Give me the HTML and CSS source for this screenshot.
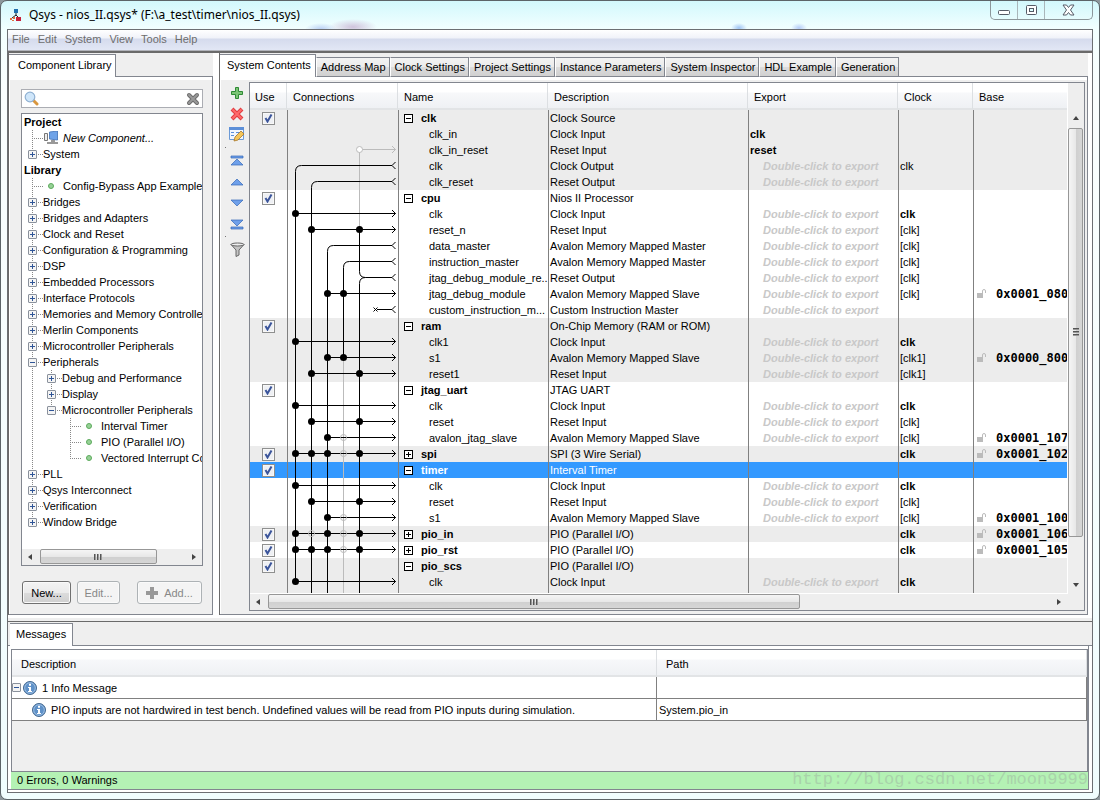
FILE: index.html
```html
<!DOCTYPE html>
<html lang="en">

<head>
    <meta charset="UTF-8">
    <title>Qsys - nios_II.qsys* (F:\a_test\timer\nios_II.qsys)</title>
    <link rel="stylesheet" href="styles.css">
</head>

<body>

    <!-- shared icons -->
    <svg class="defs" width="0" height="0">
        <symbol id="lock" viewBox="0 0 10 10">
            <path d="M0 4h6v5H0z" fill="#bbb" />
            <path d="M5.500 4V2q0-1.500 1.500-1.500T8.500 2v2" fill="none" stroke="#bbb" />
        </symbol>
        <symbol id="info" viewBox="0 0 14 14">
            <circle cx="7" cy="7" r="6.500" fill="#5f91c8" stroke="#44688f" />
            <circle cx="7" cy="7" r="5.300" fill="none" stroke="#a9c8e8" stroke-width=".8" />
            <path d="M6 2.800h2v2H6zM5 6h3v4h1v1H5v-1h1V7H5z" fill="#fff" />
        </symbol>
    </svg>

    <div class="window">
        <header class="titlebar">
            <svg class="app-icon" width="12" height="13" viewBox="0 0 12 13">
                <path d="M4 0h4v4H4z" fill="#1f6fae" />
                <path d="M6 4v3M6 6L2 9M6 6l3 3" stroke="#222" fill="none" />
                <path d="M0 9h2v2H0zM3 8h2v2H3zM2 11h2v1H2z" fill="#e0703c" />
                <path d="M6 8h5v4H6z" fill="#c8203a" />
            </svg>
            <h1>Qsys - nios_II.qsys* (F:\a_test\timer\nios_II.qsys)</h1>
            <div class="window-buttons">
                <button aria-label="Minimize"><svg width="14" height="12" viewBox="0 0 14 12">
                        <rect x="1.500" y="6.500" width="11" height="4" rx="1" fill="#fff" stroke="#555b66" />
                    </svg></button>
                <button aria-label="Maximize"><svg width="13" height="12" viewBox="0 0 13 12">
                        <rect x="1.500" y="1.500" width="10" height="9" rx="1" fill="#fff" stroke="#555b66" />
                        <rect x="4.500" y="4.500" width="4" height="3" fill="#dff" stroke="#555b66" />
                    </svg></button>
                <button class="close" aria-label="Close"><svg width="13" height="12" viewBox="0 0 13 12">
                        <path d="M1 1h3.500L6.500 3.500 8.500 1H12L8.500 6 12 11H8.500L6.500 8.500 4.500 11H1L4.500 6z" fill="#fff" stroke="#555b66" />
                    </svg></button>
            </div>
        </header>

        <div class="client">
            <nav class="menubar">
                <button>File</button>
                <button>Edit</button>
                <button>System</button>
                <button>View</button>
                <button>Tools</button>
                <button>Help</button>
            </nav>

            <main class="workspace">

                <!-- component library -->
                <section class="pane library">
                    <div class="tabs">
                        <button class="tab selected">Component Library</button>
                    </div>
                    <div class="pane-body library-body">
                        <div class="search">
                            <svg width="15" height="15" viewBox="0 0 15 15">
                                <path d="M9 9l4 4" stroke="#d9973f" stroke-width="3" stroke-linecap="round" />
                                <circle cx="6" cy="6" r="4.800" fill="#cfe6fa" stroke="#8fb0d2" stroke-width="1.200" />
                            </svg>
                            <input type="text" aria-label="Search components">
                            <button aria-label="Clear search"><svg width="14" height="14" viewBox="0 0 14 14">
                                    <path d="M3 3l8 8M11 3l-8 8" stroke="#6d6d6d" stroke-width="4" stroke-linecap="round" />
                                    <path d="M3 3l8 8M11 3l-8 8" stroke="#999" stroke-width="2" stroke-linecap="round" />
                                </svg></button>
                        </div>

                        <div class="tree-box">
                            <div class="tree">
                                <h2>Project</h2>
                                <ul>
                                    <li>
                                        <div class="leaf new"><svg width="15" height="14" viewBox="0 0 15 14">
                                                <path d="M.5 2.500h3v7h-3z" fill="#eee" stroke="#777" />
                                                <path d="M5.500 1l8-1v9l-8-1z" fill="#6fa3e8" stroke="#3d6fb5" stroke-width=".8" />
                                                <path d="M7 9h4v2h3v2H3v-2h4z" fill="#999" />
                                            </svg><em>New Component...</em></div>
                                    </li>
                                    <li><div class="branch"><button class="toggle" aria-label="Expand"></button>System</div></li>
                                </ul>
                                <h2>Library</h2>
                                <ul>
                                    <li><div class="leaf"><i class="dot"></i>Config-Bypass App Example</div></li>
                                    <li><div class="branch"><button class="toggle" aria-label="Expand"></button>Bridges</div></li>
                                    <li><div class="branch"><button class="toggle" aria-label="Expand"></button>Bridges and Adapters</div></li>
                                    <li><div class="branch"><button class="toggle" aria-label="Expand"></button>Clock and Reset</div></li>
                                    <li><div class="branch"><button class="toggle" aria-label="Expand"></button>Configuration &amp; Programming</div></li>
                                    <li><div class="branch"><button class="toggle" aria-label="Expand"></button>DSP</div></li>
                                    <li><div class="branch"><button class="toggle" aria-label="Expand"></button>Embedded Processors</div></li>
                                    <li><div class="branch"><button class="toggle" aria-label="Expand"></button>Interface Protocols</div></li>
                                    <li><div class="branch"><button class="toggle" aria-label="Expand"></button>Memories and Memory Controllers</div></li>
                                    <li><div class="branch"><button class="toggle" aria-label="Expand"></button>Merlin Components</div></li>
                                    <li><div class="branch"><button class="toggle" aria-label="Expand"></button>Microcontroller Peripherals</div></li>
                                    <li>
                                        <div class="branch"><button class="toggle open" aria-label="Collapse"></button>Peripherals</div>
                                        <ul>
                                            <li><div class="branch"><button class="toggle" aria-label="Expand"></button>Debug and Performance</div></li>
                                            <li><div class="branch"><button class="toggle" aria-label="Expand"></button>Display</div></li>
                                            <li>
                                                <div class="branch"><button class="toggle open" aria-label="Collapse"></button>Microcontroller Peripherals</div>
                                                <ul>
                                                    <li><div class="leaf"><i class="dot"></i>Interval Timer</div></li>
                                                    <li><div class="leaf"><i class="dot"></i>PIO (Parallel I/O)</div></li>
                                                    <li><div class="leaf"><i class="dot"></i>Vectored Interrupt Controller</div></li>
                                                </ul>
                                            </li>
                                        </ul>
                                    </li>
                                    <li><div class="branch"><button class="toggle" aria-label="Expand"></button>PLL</div></li>
                                    <li><div class="branch"><button class="toggle" aria-label="Expand"></button>Qsys Interconnect</div></li>
                                    <li><div class="branch"><button class="toggle" aria-label="Expand"></button>Verification</div></li>
                                    <li><div class="branch"><button class="toggle" aria-label="Expand"></button>Window Bridge</div></li>
                                </ul>
                            </div>
                            <div class="scroll horizontal">
                                <i class="arrow left"></i>
                                <div class="track"><div class="thumb tree-thumb"><i class="grip"></i></div></div>
                                <i class="arrow right"></i>
                            </div>
                        </div>

                        <div class="actions">
                            <button class="push">New...</button>
                            <button class="push" disabled>Edit...</button>
                            <button class="push add" disabled><svg width="12" height="12" viewBox="0 0 12 12">
                                    <path d="M4 0h4v4h4v4H8v4H4V8H0V4h4z" fill="#999" />
                                </svg>Add...</button>
                        </div>
                    </div>
                </section>

                <!-- system contents -->
                <section class="pane system">
                    <div class="tabs">
                        <button class="tab selected">System Contents</button>
                        <button class="tab">Address Map</button>
                        <button class="tab">Clock Settings</button>
                        <button class="tab">Project Settings</button>
                        <button class="tab">Instance Parameters</button>
                        <button class="tab">System Inspector</button>
                        <button class="tab">HDL Example</button>
                        <button class="tab">Generation</button>
                    </div>
                    <div class="pane-body system-body">
                        <div class="toolbar">
                            <button aria-label="Add"><svg width="14" height="14" viewBox="0 0 14 14">
                                    <path d="M5.500 1.500h3v4h4v3h-4v4h-3v-4h-4v-3h4z" fill="#7cc576" stroke="#2f8a35" />
                                </svg></button>
                            <button aria-label="Remove"><svg width="14" height="14" viewBox="0 0 14 14">
                                    <path d="M2 2l10 10M12 2L2 12" stroke="#e03c40" stroke-width="4" />
                                    <path d="M2.500 2.500l9 9M11.500 2.500l-9 9" stroke="#ff6a6a" stroke-width="2" />
                                </svg></button>
                            <button aria-label="Edit"><svg width="16" height="15" viewBox="0 0 16 15">
                                    <path d="M.5.5h14v12H.5z" fill="#f2f7fd" stroke="#6c9ad6" />
                                    <path d="M0 0h15v3H0z" fill="#5c8fd8" />
                                    <path d="M2 5.500h3M7 5.500h5M2 8.500h3M7 8.500h2" stroke="#5c8fd8" />
                                    <path d="M5 14l1-4 6-6 3 3-6 6z" fill="#f4c65a" stroke="#a8772a" stroke-width=".8" />
                                </svg></button>
                            <hr>
                            <button aria-label="Move to top"><svg width="14" height="12" viewBox="0 0 14 12">
                                    <path d="M1 1h12v2H1zM7 4l6 6H1z" fill="#6fa0ea" stroke="#3568b8" stroke-width=".7" />
                                </svg></button>
                            <button aria-label="Move up"><svg width="14" height="12" viewBox="0 0 14 12">
                                    <path d="M7 3l6 6H1z" fill="#6fa0ea" stroke="#3568b8" stroke-width=".7" />
                                </svg></button>
                            <button aria-label="Move down"><svg width="14" height="12" viewBox="0 0 14 12">
                                    <path d="M7 9l6-6H1z" fill="#6fa0ea" stroke="#3568b8" stroke-width=".7" />
                                </svg></button>
                            <button aria-label="Move to bottom"><svg width="14" height="12" viewBox="0 0 14 12">
                                    <path d="M1 9h12v2H1zM7 8l6-6H1z" fill="#6fa0ea" stroke="#3568b8" stroke-width=".7" />
                                </svg></button>
                            <hr>
                            <button aria-label="Filter"><svg width="15" height="16" viewBox="0 0 15 16">
                                    <path d="M1 2.500L6 8v6.500l3-1.500V8l5-5.500z" fill="#c4c4c4" stroke="#666" />
                                    <ellipse cx="7.500" cy="2.500" rx="6.500" ry="1.500" fill="#eee" stroke="#666" />
                                </svg></button>
                        </div>

                        <div class="grid-frame">
                            <div class="grid-area">
                                <div class="viewport">
                                    <table class="grid">
                                        <colgroup>
                                            <col class="c-use">
                                            <col class="c-conn">
                                            <col class="c-name">
                                            <col class="c-desc">
                                            <col class="c-export">
                                            <col class="c-clock">
                                            <col>
                                        </colgroup>
                                        <thead>
                                            <tr><th>Use</th><th>Connections</th><th>Name</th><th>Description</th><th>Export</th><th>Clock</th><th>Base</th></tr>
                                        </thead>
                                        <tbody class="alt">
                                            <tr><td><input type="checkbox" aria-label="Use clk" checked></td><td></td><td class="module"><button class="box open" aria-label="Collapse"></button>clk</td><td>Clock Source</td><td></td><td></td><td></td></tr>
                                            <tr><td></td><td></td><td class="port">clk_in</td><td>Clock Input</td><td><b>clk</b></td><td></td><td></td></tr>
                                            <tr><td></td><td></td><td class="port">clk_in_reset</td><td>Reset Input</td><td><b>reset</b></td><td></td><td></td></tr>
                                            <tr><td></td><td></td><td class="port">clk</td><td>Clock Output</td><td class="hint">Double-click to export</td><td>clk</td><td></td></tr>
                                            <tr><td></td><td></td><td class="port">clk_reset</td><td>Reset Output</td><td class="hint">Double-click to export</td><td></td><td></td></tr>
                                        </tbody>
                                        <tbody>
                                            <tr><td><input type="checkbox" aria-label="Use cpu" checked></td><td></td><td class="module"><button class="box open" aria-label="Collapse"></button>cpu</td><td>Nios II Processor</td><td></td><td></td><td></td></tr>
                                            <tr><td></td><td></td><td class="port">clk</td><td>Clock Input</td><td class="hint">Double-click to export</td><td><b>clk</b></td><td></td></tr>
                                            <tr><td></td><td></td><td class="port">reset_n</td><td>Reset Input</td><td class="hint">Double-click to export</td><td>[clk]</td><td></td></tr>
                                            <tr><td></td><td></td><td class="port">data_master</td><td>Avalon Memory Mapped Master</td><td class="hint">Double-click to export</td><td>[clk]</td><td></td></tr>
                                            <tr><td></td><td></td><td class="port">instruction_master</td><td>Avalon Memory Mapped Master</td><td class="hint">Double-click to export</td><td>[clk]</td><td></td></tr>
                                            <tr><td></td><td></td><td class="port">jtag_debug_module_re...</td><td>Reset Output</td><td class="hint">Double-click to export</td><td>[clk]</td><td></td></tr>
                                            <tr><td></td><td></td><td class="port">jtag_debug_module</td><td>Avalon Memory Mapped Slave</td><td class="hint">Double-click to export</td><td>[clk]</td><td class="base"><svg><use href="#lock" /></svg>0x0001_0800</td></tr>
                                            <tr><td></td><td></td><td class="port">custom_instruction_m...</td><td>Custom Instruction Master</td><td class="hint">Double-click to export</td><td></td><td></td></tr>
                                        </tbody>
                                        <tbody class="alt">
                                            <tr><td><input type="checkbox" aria-label="Use ram" checked></td><td></td><td class="module"><button class="box open" aria-label="Collapse"></button>ram</td><td>On-Chip Memory (RAM or ROM)</td><td></td><td></td><td></td></tr>
                                            <tr><td></td><td></td><td class="port">clk1</td><td>Clock Input</td><td class="hint">Double-click to export</td><td><b>clk</b></td><td></td></tr>
                                            <tr><td></td><td></td><td class="port">s1</td><td>Avalon Memory Mapped Slave</td><td class="hint">Double-click to export</td><td>[clk1]</td><td class="base"><svg><use href="#lock" /></svg>0x0000_8000</td></tr>
                                            <tr><td></td><td></td><td class="port">reset1</td><td>Reset Input</td><td class="hint">Double-click to export</td><td>[clk1]</td><td></td></tr>
                                        </tbody>
                                        <tbody>
                                            <tr><td><input type="checkbox" aria-label="Use jtag_uart" checked></td><td></td><td class="module"><button class="box open" aria-label="Collapse"></button>jtag_uart</td><td>JTAG UART</td><td></td><td></td><td></td></tr>
                                            <tr><td></td><td></td><td class="port">clk</td><td>Clock Input</td><td class="hint">Double-click to export</td><td><b>clk</b></td><td></td></tr>
                                            <tr><td></td><td></td><td class="port">reset</td><td>Reset Input</td><td class="hint">Double-click to export</td><td>[clk]</td><td></td></tr>
                                            <tr><td></td><td></td><td class="port">avalon_jtag_slave</td><td>Avalon Memory Mapped Slave</td><td class="hint">Double-click to export</td><td>[clk]</td><td class="base"><svg><use href="#lock" /></svg>0x0001_1070</td></tr>
                                        </tbody>
                                        <tbody class="alt">
                                            <tr><td><input type="checkbox" aria-label="Use spi" checked></td><td></td><td class="module"><button class="box" aria-label="Expand"></button>spi</td><td>SPI (3 Wire Serial)</td><td></td><td><b>clk</b></td><td class="base"><svg><use href="#lock" /></svg>0x0001_1020</td></tr>
                                        </tbody>
                                        <tbody>
                                            <tr class="selected"><td><input type="checkbox" aria-label="Use timer" checked></td><td></td><td class="module"><button class="box open" aria-label="Collapse"></button>timer</td><td>Interval Timer</td><td></td><td></td><td></td></tr>
                                            <tr><td></td><td></td><td class="port">clk</td><td>Clock Input</td><td class="hint">Double-click to export</td><td><b>clk</b></td><td></td></tr>
                                            <tr><td></td><td></td><td class="port">reset</td><td>Reset Input</td><td class="hint">Double-click to export</td><td>[clk]</td><td></td></tr>
                                            <tr><td></td><td></td><td class="port">s1</td><td>Avalon Memory Mapped Slave</td><td class="hint">Double-click to export</td><td>[clk]</td><td class="base"><svg><use href="#lock" /></svg>0x0001_1000</td></tr>
                                        </tbody>
                                        <tbody class="alt">
                                            <tr><td><input type="checkbox" aria-label="Use pio_in" checked></td><td></td><td class="module"><button class="box" aria-label="Expand"></button>pio_in</td><td>PIO (Parallel I/O)</td><td></td><td><b>clk</b></td><td class="base"><svg><use href="#lock" /></svg>0x0001_1060</td></tr>
                                        </tbody>
                                        <tbody>
                                            <tr><td><input type="checkbox" aria-label="Use pio_rst" checked></td><td></td><td class="module"><button class="box" aria-label="Expand"></button>pio_rst</td><td>PIO (Parallel I/O)</td><td></td><td><b>clk</b></td><td class="base"><svg><use href="#lock" /></svg>0x0001_1050</td></tr>
                                        </tbody>
                                        <tbody class="alt">
                                            <tr><td><input type="checkbox" aria-label="Use pio_scs" checked></td><td></td><td class="module"><button class="box open" aria-label="Collapse"></button>pio_scs</td><td>PIO (Parallel I/O)</td><td></td><td></td><td></td></tr>
                                            <tr><td></td><td></td><td class="port">clk</td><td>Clock Input</td><td class="hint">Double-click to export</td><td><b>clk</b></td><td></td></tr>
                                            <tr><td></td><td></td><td></td><td></td><td></td><td></td><td></td></tr>
                                        </tbody>
                                    </table>

                                    <!-- wires drawn over the Connections column, 16px per row -->
                                    <svg class="wires" width="110" height="484" viewBox="0 0 110 484">
                                        <defs>
                                            <marker id="in" markerUnits="userSpaceOnUse" markerWidth="6" markerHeight="9" refX="4.500" refY="4.500" viewBox="0 0 6 9">
                                                <path d="M1 1l3.500 3.500L1 8" fill="none" stroke="#000" />
                                            </marker>
                                            <marker id="in-off" markerUnits="userSpaceOnUse" markerWidth="6" markerHeight="9" refX="4.500" refY="4.500" viewBox="0 0 6 9">
                                                <path d="M1 1l3.500 3.500L1 8" fill="none" stroke="#bbb" />
                                            </marker>
                                            <marker id="out" markerUnits="userSpaceOnUse" markerWidth="6" markerHeight="9" refX="1" refY="4.500" viewBox="0 0 6 9">
                                                <path d="M4.500 1L1 4.500 4.500 8" fill="none" stroke="#000" />
                                            </marker>
                                        </defs>

                                        <g class="off">
                                            <path d="M71.500 39.500H107.500" marker-end="url(#in-off)" />
                                            <path d="M71.500 39.500V119.500M55.500 247.500V484" />
                                        </g>

                                        <g class="on">
                                            <path d="M7.500 471.500V61.500Q7.500 55.500 13.500 55.500H104" marker-end="url(#out)" />
                                            <path d="M23.500 484V77.500Q23.500 71.500 29.500 71.500H104" marker-end="url(#out)" />
                                            <path d="M39.500 484V141.500Q39.500 135.500 45.500 135.500H104" marker-end="url(#out)" />
                                            <path d="M55.500 247.500V157.500Q55.500 151.500 61.500 151.500H104" marker-end="url(#out)" />
                                            <path d="M71.500 484V173.500Q71.500 167.500 77.500 167.500H104" marker-end="url(#out)" />
                                            <path d="M71.500 119.500V161.500Q71.500 167.500 77.500 167.500" />
                                            <path d="M92 199.500H104" marker-end="url(#out)" />
                                            <path d="M85.500 197.500l4 4M89.500 197.500l-4 4M89 199.500h4" />
                                        </g>
                                        <g class="on">
                                            <path d="M7.500 103.500H107.500" marker-end="url(#in)" />
                                            <path d="M23.500 119.500H107.500" marker-end="url(#in)" />
                                            <path d="M39.500 183.500H107.500" marker-end="url(#in)" />
                                            <path d="M7.500 231.500H107.500" marker-end="url(#in)" />
                                            <path d="M39.500 247.500H107.500" marker-end="url(#in)" />
                                            <path d="M23.500 263.500H107.500" marker-end="url(#in)" />
                                            <path d="M7.500 295.500H107.500" marker-end="url(#in)" />
                                            <path d="M23.500 311.500H107.500" marker-end="url(#in)" />
                                            <path d="M39.500 327.500H107.500" marker-end="url(#in)" />
                                            <path d="M7.500 343.500H107.500" marker-end="url(#in)" />
                                            <path d="M7.500 375.500H107.500" marker-end="url(#in)" />
                                            <path d="M23.500 391.500H107.500" marker-end="url(#in)" />
                                            <path d="M39.500 407.500H107.500" marker-end="url(#in)" />
                                            <path d="M7.500 423.500H107.500" marker-end="url(#in)" />
                                            <path d="M7.500 439.500H107.500" marker-end="url(#in)" />
                                            <path d="M7.500 471.500H107.500" marker-end="url(#in)" />
                                        </g>

                                        <g class="joined">
                                            <circle cx="7.500" cy="103.500" r="3.500" />
                                            <circle cx="23.500" cy="119.500" r="3.500" /><circle cx="71.500" cy="119.500" r="3.500" />
                                            <circle cx="39.500" cy="183.500" r="3.500" /><circle cx="55.500" cy="183.500" r="3.500" />
                                            <circle cx="7.500" cy="231.500" r="3.500" />
                                            <circle cx="39.500" cy="247.500" r="3.500" /><circle cx="55.500" cy="247.500" r="3.500" />
                                            <circle cx="23.500" cy="263.500" r="3.500" /><circle cx="71.500" cy="263.500" r="3.500" />
                                            <circle cx="7.500" cy="295.500" r="3.500" />
                                            <circle cx="23.500" cy="311.500" r="3.500" /><circle cx="71.500" cy="311.500" r="3.500" />
                                            <circle cx="39.500" cy="327.500" r="3.500" />
                                            <circle cx="7.500" cy="343.500" r="3.500" /><circle cx="23.500" cy="343.500" r="3.500" /><circle cx="39.500" cy="343.500" r="3.500" /><circle cx="71.500" cy="343.500" r="3.500" />
                                            <circle cx="7.500" cy="375.500" r="3.500" />
                                            <circle cx="23.500" cy="391.500" r="3.500" /><circle cx="71.500" cy="391.500" r="3.500" />
                                            <circle cx="39.500" cy="407.500" r="3.500" />
                                            <circle cx="7.500" cy="423.500" r="3.500" /><circle cx="39.500" cy="423.500" r="3.500" /><circle cx="71.500" cy="423.500" r="3.500" />
                                            <circle cx="7.500" cy="439.500" r="3.500" /><circle cx="23.500" cy="439.500" r="3.500" /><circle cx="39.500" cy="439.500" r="3.500" /><circle cx="71.500" cy="439.500" r="3.500" />
                                            <circle cx="7.500" cy="471.500" r="3.500" />
                                        </g>
                                        <g class="open-joint">
                                            <circle cx="71.500" cy="39.500" r="3" fill="#fff" />
                                            <circle cx="55.500" cy="327.500" r="3" />
                                            <circle cx="55.500" cy="343.500" r="3" />
                                            <circle cx="55.500" cy="407.500" r="3" />
                                            <circle cx="23.500" cy="423.500" r="3" />
                                            <circle cx="55.500" cy="423.500" r="3" />
                                            <circle cx="55.500" cy="439.500" r="3" />
                                        </g>
                                    </svg>
                                </div>
                                <div class="scroll vertical">
                                    <i class="arrow up"></i>
                                    <div class="track"><div class="thumb grid-thumb-v"><i class="grip"></i></div></div>
                                    <i class="arrow down"></i>
                                </div>
                            </div>
                            <div class="scroll horizontal grid-scroll">
                                <i class="arrow left"></i>
                                <div class="track"><div class="thumb grid-thumb-h"><i class="grip"></i></div></div>
                                <i class="arrow right"></i>
                            </div>
                        </div>
                    </div>
                </section>
            </main>

            <!-- messages -->
            <section class="messages">
                <div class="tabs">
                    <button class="tab selected">Messages</button>
                </div>
                <div class="messages-body">
                    <div class="messages-frame">
                        <table class="message-table">
                            <thead>
                                <tr><th>Description</th><th>Path</th></tr>
                            </thead>
                            <tbody>
                                <tr><td><div class="message"><button class="toggle open" aria-label="Collapse"></button><svg><use href="#info" /></svg>1 Info Message</div></td><td></td></tr>
                                <tr><td><div class="message child"><svg><use href="#info" /></svg>PIO inputs are not hardwired in test bench. Undefined values will be read from PIO inputs during simulation.</div></td><td>System.pio_in</td></tr>
                            </tbody>
                        </table>
                    </div>
                    <footer class="status">
                        <span>0 Errors, 0 Warnings</span>
                        <span class="watermark">http://blog.csdn.net/moon9999</span>
                    </footer>
                </div>
            </section>
        </div>
    </div>

</body>

</html>
```

FILE: styles.css
```css
* {
    box-sizing: border-box;
}

body {
    margin: 0;
    background: #8d979c;
    font-family: "Liberation Sans", Arial, sans-serif;
    font-size: 11px;
    line-height: 16px;
    color: #000;
}

button {
    font: inherit;
    color: inherit;
    margin: 0;
    padding: 0;
    border: 0;
    background: none;
}

ul {
    list-style: none;
    margin: 0;
    padding: 0;
}

svg {
    display: block;
    flex: none;
}

.defs {
    position: absolute;
}

/* window frame */

.window {
    display: flex;
    flex-direction: column;
    height: 100vh;
    padding: 0 6px 6px;
    border: 1px solid #5c6468;
    border-radius: 7px;
    background:
        radial-gradient(ellipse 24px 8px at 352px 26px, #cfc3dc, transparent),
        radial-gradient(ellipse 16px 6px at 320px 28px, #b9d0f4, transparent),
        radial-gradient(ellipse 8px 5px at 738px 27px, #9fc4f4, transparent),
        radial-gradient(ellipse 8px 5px at 798px 27px, #b4ccf8, transparent),
        linear-gradient(#d2f8fc, #f2ffff 28px, #fafefe 90px, #f0fdfe);
}

.titlebar {
    display: flex;
    flex: none;
    align-items: center;
    height: 28px;
    padding-left: 3px;
}

.titlebar h1 {
    flex: 1;
    margin: 0 0 0 7px;
    font-family: "Noto Sans", sans-serif;
    font-size: 12px;
    font-weight: normal;
}

.window-buttons {
    display: flex;
    align-self: flex-start;
    height: 19px;
    border: 1px solid #8c979b;
    border-top: 0;
    border-radius: 0 0 5px 5px;
}

.window-buttons button {
    display: flex;
    align-items: center;
    justify-content: center;
    width: 27px;
    border-right: 1px solid #a9b6ba;
}

.window-buttons .close {
    width: 47px;
    border-right: 0;
}

.client {
    display: flex;
    flex: 1;
    flex-direction: column;
    min-height: 0;
    border: 1px solid #6c6f73;
    background: #fff;
}

.menubar {
    display: flex;
    flex: none;
    gap: 8px;
    height: 21px;
    padding: 0 4px 2px;
    border-bottom: 1px solid #b2b4bb;
    background: linear-gradient(#fff, #f0f2f9 8px, #d5dbed 9px, #e2e7f5);
    color: #6d6d6d;
}

/* panes and tabs */

.workspace {
    display: flex;
    flex: 1;
    gap: 6px;
    min-height: 0;
    padding: 0 4px 3px 0;
    border-top: 2px solid #6a6a6a;
}

.pane {
    display: flex;
    flex-direction: column;
    border-left: 1px solid #6a6a6a;
}

.library {
    flex: none;
    width: 205px;
}

.system {
    flex: 1;
    min-width: 0;
}

.tabs {
    display: flex;
    flex: none;
    align-items: flex-end;
    height: 24px;
    background: #efefef;
    box-shadow: inset 0 -1px #82868f;
}

.tab {
    height: 20px;
    padding: 0 3px 1px 4px;
    border: 1px solid #82868f;
    border-left-color: #fff;
    background: linear-gradient(#f3f3f3, #ebebeb 50%, #dcdcdc 51%, #d0d0d0);
    white-space: nowrap;
}

.tab.selected {
    height: 23px;
    padding: 0 4px 2px 7px;
    border-bottom: 0;
    border-left: 0;
    background: #fff;
}

.library .tab.selected {
    padding-right: 3px;
    padding-left: 9px;
}

.pane-body {
    display: flex;
    flex: 1;
    min-height: 0;
    border: solid #82868f;
    border-width: 0 1px 1px 0;
    background: #efefef;
    box-shadow: inset 1px 3px #fff;
}

.library-body {
    flex-direction: column;
    padding: 12px 9px 10px 12px;
}

.system-body {
    padding: 5px 2px 3px 0;
}

/* component library */

.search {
    display: flex;
    flex: none;
    align-items: center;
    height: 19px;
    margin-bottom: 5px;
    padding: 0 2px;
    border: 1px solid #abadb3;
    background: #fff;
}

.search input {
    flex: 1;
    min-width: 0;
    height: 15px;
    padding: 0 2px;
    border: 0;
    outline: 0;
    font: inherit;
}

.tree-box {
    display: flex;
    flex: 1;
    flex-direction: column;
    min-height: 0;
    border: 1px solid #82868f;
    background: #fff;
}

.tree {
    flex: 1;
    min-height: 0;
    overflow: hidden;
    white-space: nowrap;
}

.tree h2 {
    margin: 0 0 0 2px;
    font-size: 11px;
    line-height: 16px;
}

.tree li {
    background: repeating-linear-gradient(#888 0 1px, transparent 1px 2px) no-repeat 10px 0 / 1px 100%;
}

.tree li:last-child {
    background-size: 1px 8px;
}

.tree li ul {
    margin-left: 19px;
}

.branch,
.leaf {
    display: flex;
    align-items: center;
    height: 16px;
    background: repeating-linear-gradient(90deg, #888 0 1px, transparent 1px 2px) no-repeat 10px 8px / 11px 1px;
}

.branch {
    gap: 6px;
    padding-left: 6px;
}

.leaf {
    padding-left: 26px;
}

.leaf.new {
    gap: 4px;
    padding-left: 22px;
}

.dot {
    flex: none;
    width: 6px;
    height: 6px;
    margin-right: 9px;
    border-radius: 50%;
    border: 1px solid #5cab5c;
    background: #97d197;
}

.toggle {
    flex: none;
    width: 9px;
    height: 9px;
    border: 1px solid #8a919c;
    border-radius: 1px;
    background:
        linear-gradient(#2f5597, #2f5597) no-repeat center / 5px 1px,
        linear-gradient(#2f5597, #2f5597) no-repeat center / 1px 5px,
        #f4f4f4;
}

.toggle.open {
    background:
        linear-gradient(#2f5597, #2f5597) no-repeat center / 5px 1px,
        #f4f4f4;
}

.actions {
    display: flex;
    flex: none;
    gap: 6px;
    margin: 15px 1px 0;
}

.push {
    display: flex;
    align-items: center;
    justify-content: center;
    width: 49px;
    height: 23px;
    border: 1px solid #707070;
    border-radius: 3px;
    background: linear-gradient(#f3f3f3, #ebebeb 50%, #dcdcdc 51%, #cfcfcf);
    box-shadow: inset 0 0 0 1px #fafafa;
}

.push:disabled {
    width: 43px;
    border-color: #adb2b5;
    background: #f4f4f4;
    color: #888;
}

.push.add:disabled {
    gap: 6px;
    width: 65px;
    margin-left: auto;
}

/* scroll bars */

.scroll {
    display: flex;
    flex: none;
    align-items: center;
    background: #eee;
}

.scroll.horizontal {
    height: 16px;
}

.scroll.vertical {
    flex-direction: column;
    width: 17px;
    padding-top: 27px;
    border-left: 1px solid #fff;
}

.track {
    flex: 1;
    align-self: stretch;
    min-height: 0;
}

.thumb {
    display: flex;
    align-items: center;
    justify-content: center;
    border: 1px solid #979797;
    border-radius: 2px;
}

.horizontal .thumb {
    height: 15px;
    background: linear-gradient(#f5f5f5, #e8e8e8 50%, #cfcfcf 51%, #d6d6d6);
}

.vertical .thumb {
    width: 15px;
    background: linear-gradient(90deg, #f5f5f5, #e8e8e8 50%, #cfcfcf 51%, #d6d6d6);
}

.horizontal .grip {
    width: 8px;
    height: 6px;
    background: repeating-linear-gradient(90deg, #555 0 1px, #999 1px 2px, transparent 2px 3px);
}

.vertical .grip {
    width: 6px;
    height: 8px;
    background: repeating-linear-gradient(#555 0 1px, #999 1px 2px, transparent 2px 3px);
}

.arrow {
    flex: none;
    margin: 6px;
    border: 3px solid transparent;
}

.horizontal .arrow {
    margin: 0 6px;
}

.horizontal .arrow.left {
    border-left: 0;
    border-right: 4px solid #444;
    margin-right: 8px;
}

.arrow.right {
    border-right: 0;
    border-left: 4px solid #444;
}

.arrow.up {
    border-top: 0;
    border-bottom: 4px solid #444;
    margin-bottom: 8px;
}

.arrow.down {
    border-bottom: 0;
    border-top: 4px solid #444;
    margin-bottom: 7px;
}

.tree-thumb {
    width: 80%;
}

.grid-thumb-h {
    width: 68%;
}

.grid-thumb-v {
    height: 91%;
}

.grid-scroll {
    margin-right: 17px;
}

/* system contents */

.toolbar {
    display: flex;
    flex: none;
    flex-direction: column;
    align-items: center;
    width: 29px;
    padding-left: 5px;
}

.toolbar button {
    display: flex;
    align-items: center;
    justify-content: center;
    width: 20px;
    height: 21px;
}

.toolbar hr {
    align-self: flex-start;
    width: 1px;
    height: 1px;
    margin: 2px 0;
    border: 0;
    background: #777;
}

.grid-frame {
    display: flex;
    flex: 1;
    flex-direction: column;
    min-width: 0;
    border: 1px solid #82868f;
    background: #eee;
}

.grid-area {
    display: flex;
    flex: 1;
    min-height: 0;
}

.viewport {
    position: relative;
    flex: 1;
    min-width: 0;
    overflow: hidden;
    border-bottom: 1px solid #fff;
}

.grid {
    width: 100%;
    border-collapse: separate;
    border-spacing: 0;
    table-layout: fixed;
    background: #fff;
}

.c-use {
    width: 37px;
}

.c-conn {
    width: 111px;
}

.c-name,
.c-export {
    width: 150px;
}

.c-desc {
    width: 200px;
}

.c-clock {
    width: 75px;
}

th {
    padding: 2px 0 0 5px;
    border: solid #dcdfe2;
    border-width: 0 1px 1px 0;
    background: linear-gradient(#fff, #fff 9px, #f7f8fa 10px, #eff1f4);
    font-weight: normal;
    text-align: left;
}

.grid th {
    height: 27px;
    border-bottom: 2px solid #e2e4e6;
}

.grid th:not(:first-child) {
    padding-left: 6px;
}

.grid th:last-child {
    border-right: 0;
}

.grid td {
    height: 16px;
    padding: 0 0 0 1px;
    overflow: hidden;
    white-space: nowrap;
}

.grid td:not(:first-child) {
    border-left: 1px solid #808080;
}

.grid .alt {
    background: #ececec;
}

.grid .selected {
    background: #3399ff;
    color: #fff;
}

.grid input {
    display: block;
    width: 13px;
    height: 13px;
    margin: 0 0 0 11px;
    border: 1px solid #8e8f8f;
    appearance: none;
    background: #eef0f4 url("data:image/svg+xml,%3Csvg xmlns='http://www.w3.org/2000/svg' viewBox='0 0 11 11'%3E%3Cpath d='M2.500 5l2 3.500L8.500 1.500' fill='none' stroke='%233b559b' stroke-width='2'/%3E%3C/svg%3E") no-repeat center / 11px 11px;
    box-shadow: inset 0 0 0 1px #f8f8f8;
}

.grid .module {
    padding-left: 5px;
    font-weight: bold;
}

.box {
    display: inline-block;
    width: 9px;
    height: 9px;
    margin-right: 8px;
    border: 1px solid #000;
    background:
        linear-gradient(#000, #000) no-repeat center / 5px 1px,
        linear-gradient(#000, #000) no-repeat center / 1px 5px,
        #fff;
}

.box.open {
    background:
        linear-gradient(#000, #000) no-repeat center / 5px 1px,
        #fff;
}

.grid .port {
    padding-left: 30px;
}

.grid .hint {
    padding: 1px 0 0 14px;
    color: #c8c8c8;
    font-style: italic;
    font-weight: bold;
    line-height: 15px;
}

.grid .base {
    padding-left: 3px;
    font-family: "DejaVu Sans Mono", monospace;
    font-size: 12px;
    font-weight: bold;
}

.base svg {
    display: inline-block;
    width: 10px;
    height: 10px;
    margin-right: 9px;
    vertical-align: -1px;
}

.wires {
    position: absolute;
    top: 27px;
    left: 38px;
}

.on,
.off {
    fill: none;
    stroke: #000;
}

.off,
.open-joint {
    stroke: #bbb;
}

.open-joint {
    fill: none;
}

/* messages */

.messages {
    flex: none;
    padding: 0 3px 2px 0;
    border-top: 3px solid #efefef;
}

.messages .tabs {
    height: 25px;
    margin-right: -3px;
    padding-left: 2px;
    border-top: 1px solid #6a6a6a;
}

.messages .tab.selected {
    padding-left: 6px;
    padding-right: 6px;
}

.messages-body {
    padding: 3px 0 0 3px;
    border: solid #82868f;
    border-width: 0 1px 1px 0;
}

.messages-frame {
    min-height: 123px;
    border: 1px solid #82868f;
    background: #efefef;
}

.message-table {
    width: 100%;
    border-collapse: separate;
    border-spacing: 0;
    table-layout: fixed;
    background: #fff;
}

.message-table th {
    height: 27px;
    padding-left: 9px;
    border-bottom: 2px solid #e2e4e6;
}

.message-table th:first-child {
    width: 60%;
}

.message-table td {
    height: 22px;
    padding: 0 2px 0 0;
    border: solid #808080;
    border-width: 0 1px 1px 0;
}

.message-table td:last-child {
    padding-left: 2px;
}

.message {
    display: flex;
    align-items: center;
    gap: 5px;
}

.message svg {
    width: 14px;
    height: 14px;
}

.message .toggle {
    margin-right: -3px;
}

.message.child {
    padding-left: 20px;
}

.status {
    display: flex;
    align-items: center;
    justify-content: space-between;
    height: 17px;
    padding: 0 0 1px 6px;
    background: #b4f2b4;
}

.watermark {
    color: #a9d3aa;
    font-family: "Liberation Mono", monospace;
    font-size: 17px;
}
```
